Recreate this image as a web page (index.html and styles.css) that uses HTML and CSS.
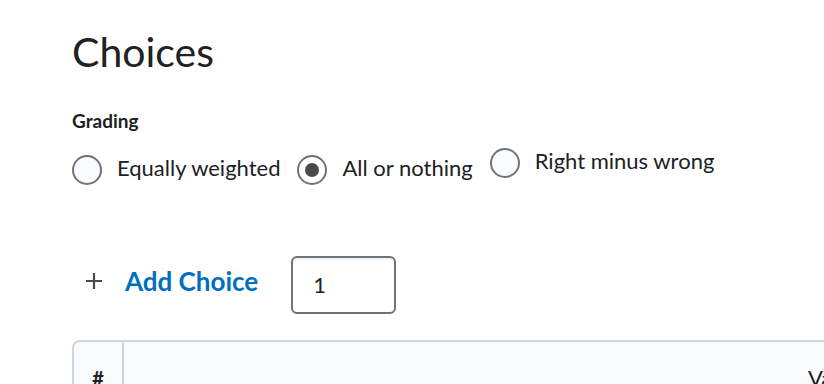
FILE: index.html
```html
<!DOCTYPE html>
<html lang="en">
  <head>
    <meta charset="UTF-8" />
    <meta name="viewport" content="width=device-width, initial-scale=1.0" />
    <title>Choices</title>
    <link rel="stylesheet" href="styles.css">
  </head>
  <body>
    <div class="page">
      <h1 class="title">Choices</h1>

      <!-- grading options -->
      <div class="label">Grading</div>
      <div class="options">
        <label class="option">
          <span class="radio"></span>
          <span class="option-text">Equally weighted</span>
        </label>
        <label class="option">
          <span class="radio checked"></span>
          <span class="option-text">All or nothing</span>
        </label>
        <label class="option option-raised">
          <span class="radio"></span>
          <span class="option-text">Right minus wrong</span>
        </label>
      </div>

      <!-- add choice -->
      <div class="add-row">
        <a class="add-link" href="#">
          <svg class="plus" width="18" height="18" viewBox="0 0 18 18">
            <path d="M9 1v16M1 9h16" stroke="#494c4e" stroke-width="2.2" fill="none" />
          </svg>
          <span>Add Choice</span>
        </a>
        <div class="count">1</div>
      </div>

      <!-- choices table -->
      <div class="table">
        <div class="th th-num">#</div>
        <div class="th th-value">Value</div>
      </div>
    </div>
  </body>
</html>
```

FILE: styles.css
```css
*{
    padding: 0;
    margin: 0;
    box-sizing: border-box;
}
body{
    font-family: Lato, "Noto Sans", sans-serif;
    color: #202122;
    background: #fff;
    overflow: hidden;
}
.page{
    padding: 0 0 0 72px;
    width: 824px;
}
.title{
    font-size: 41px;
    font-weight: 400;
    line-height: 52px;
    margin-top: 26px;
}
.label{
    font-size: 19px;
    font-weight: 700;
    line-height: 20px;
    margin-top: 33px;
}
.options{
    display: flex;
    align-items: flex-start;
    margin-top: 17px;
}
.option{
    display: flex;
    align-items: center;
    margin-right: 17px;
    margin-top: 7px;
    font-size: 22px;
}
.option-raised{
    margin-top: 0;
}
.radio{
    width: 30px;
    height: 30px;
    border: 2px solid #6e7477;
    border-radius: 50%;
    background: #f9fbff;
    margin-right: 15px;
    display: flex;
    align-items: center;
    justify-content: center;
}
.radio.checked{
    background: #fff;
}
.radio.checked::after{
    content: "";
    width: 14px;
    height: 14px;
    border-radius: 50%;
    background: #494c4e;
}
.option-text{
    line-height: 30px;
    position: relative;
    top: -2px;
}
.add-row{
    display: flex;
    align-items: center;
    margin-top: 71px;
    padding-left: 13px;
}
.add-link{
    display: flex;
    align-items: center;
    color: #006fbf;
    text-decoration: none;
    font-size: 26px;
    font-weight: 700;
    margin-bottom: 8px;
}
.plus{
    margin-right: 22px;
}
.count{
    margin-left: 33px;
    width: 105px;
    height: 58px;
    border: 2px solid #6e7477;
    border-radius: 6px;
    box-shadow: inset 0 2px 0 #f1f3f5;
    font-size: 22px;
    line-height: 54px;
    padding-left: 20px;
}
.table{
    display: flex;
    margin-top: 26px;
    width: 800px;
    height: 60px;
    border: 2px solid #cdd5dc;
    border-right: none;
    border-bottom: none;
    border-radius: 8px 0 0 0;
    background: #f9fbff;
}
.th{
    font-size: 20px;
    font-weight: 700;
    padding-top: 24px;
}
.th-num{
    width: 50px;
    border-right: 2px solid #cdd5dc;
    text-align: center;
}
.th-value{
    flex: 1;
    font-weight: 400;
    font-size: 22px;
    padding-left: 684px;
    padding-top: 22px;
}
```
